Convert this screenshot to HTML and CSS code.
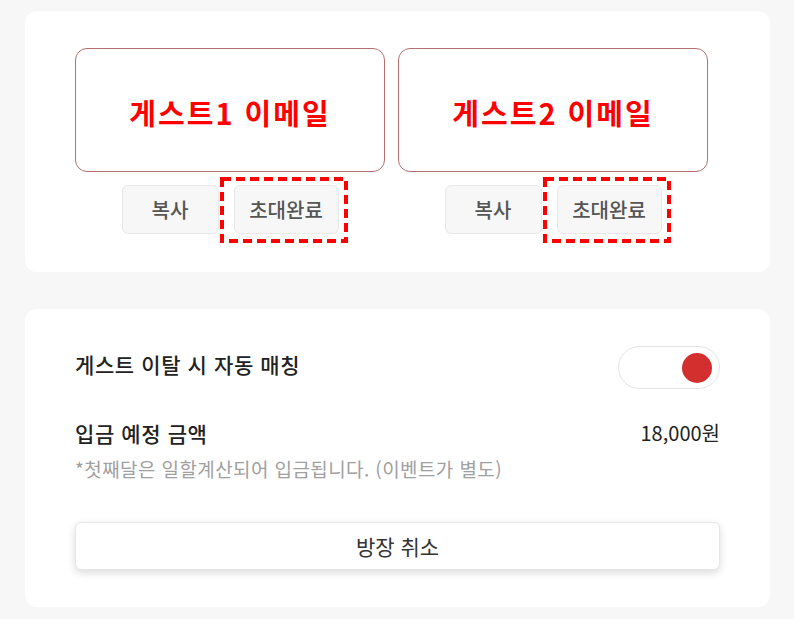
FILE: index.html
```html
<!DOCTYPE html>
<html lang="ko">
<head>
    <meta charset="UTF-8">
    <title>게스트 초대</title>
    <link rel="stylesheet" href="styles.css">
</head>
<body>
<div class="card invite">
    <div class="guests">
        <div class="guest">
            <div class="email">게스트1 이메일</div>
            <div class="actions">
                <span class="btn copy">복사</span>
                <span class="mark">
                    <span class="btn done">초대완료</span>
                    <svg class="dash" width="128" height="66" viewBox="0 0 128 66"><rect x="2" y="2" width="124" height="62" fill="none" stroke="#ff0000" stroke-width="4" stroke-dasharray="9 5"/></svg>
                </span>
            </div>
        </div>
        <div class="guest">
            <div class="email">게스트2 이메일</div>
            <div class="actions">
                <span class="btn copy">복사</span>
                <span class="mark">
                    <span class="btn done">초대완료</span>
                    <svg class="dash" width="128" height="66" viewBox="0 0 128 66"><rect x="2" y="2" width="124" height="62" fill="none" stroke="#ff0000" stroke-width="4" stroke-dasharray="9 5"/></svg>
                </span>
            </div>
        </div>
    </div>
</div>
<div class="card settings">
    <div class="row">
        <span class="label first">게스트 이탈 시 자동 매칭</span>
        <span class="toggle"><span class="knob"></span></span>
    </div>
    <div class="row amount">
        <span class="label">입금 예정 금액</span>
        <span class="price">18,000원</span>
    </div>
    <p class="note">*첫째달은 일할계산되어 입금됩니다. (이벤트가 별도)</p>
    <div class="cancel">방장 취소</div>
</div>
</body>
</html>
```

FILE: styles.css
```css
*{
    margin: 0;
    padding: 0;
    box-sizing: border-box;
}
body{
    background: #f7f7f7;
    font-family: "Noto Sans CJK KR", "Noto Sans", sans-serif;
    color: #222;
    padding: 11px 24px 0 25px;
}
.card{
    background: #fff;
    border-radius: 12px;
}
.invite{
    height: 261px;
    padding: 37px 50px 0;
}
.guests{
    display: flex;
    gap: 13px;
}
.guest{
    width: 310px;
    display: flex;
    flex-direction: column;
    align-items: center;
}
.email{
    width: 100%;
    height: 124px;
    border: 1px solid #b46f6f;
    border-radius: 12px;
    display: flex;
    align-items: center;
    justify-content: center;
    padding-top: 4px;
    color: #ff0000;
    font-size: 29px;
    font-weight: 700;
    letter-spacing: 2px;
}
.actions{
    margin-top: 13px;
    display: flex;
    gap: 15px;
}
.btn{
    display: flex;
    align-items: center;
    justify-content: center;
    height: 49px;
    background: #f7f7f7;
    border: 1px solid #e8e8e8;
    border-radius: 6px;
    color: #555;
    font-size: 20px;
    font-weight: 500;
}
.copy{
    width: 97px;
}
.done{
    width: 105px;
}
.mark{
    position: relative;
}
.dash{
    position: absolute;
    left: -14px;
    top: -8px;
}
.settings{
    margin-top: 37px;
    height: 298px;
    padding: 37px 50px;
}
.row{
    display: flex;
    align-items: center;
    justify-content: space-between;
}
.label{
    font-size: 21px;
    font-weight: 500;
    letter-spacing: 0.6px;
}
.first{
    margin-bottom: 8px;
}
.toggle{
    position: relative;
    width: 102px;
    height: 43px;
    border: 1px solid #e3e3e3;
    border-radius: 22px;
}
.knob{
    position: absolute;
    right: 7px;
    top: 6px;
    width: 30px;
    height: 30px;
    border-radius: 50%;
    background: #d32f2f;
}
.amount{
    margin-top: 29px;
    line-height: 30px;
}
.price{
    font-size: 20px;
}
.note{
    margin-top: 8px;
    font-size: 19px;
    line-height: 26px;
    letter-spacing: 0.4px;
    color: #a0a0a0;
}
.cancel{
    margin-top: 40px;
    height: 48px;
    background: #fff;
    border: 1px solid #e6e6e6;
    border-radius: 6px;
    box-shadow: 0 3px 8px rgba(0,0,0,0.14);
    display: flex;
    align-items: center;
    justify-content: center;
    font-size: 21px;
    color: #333;
}
```
